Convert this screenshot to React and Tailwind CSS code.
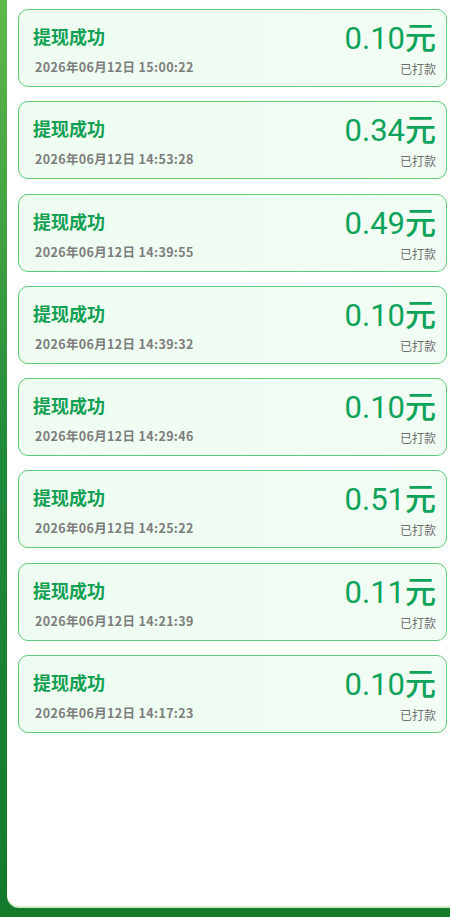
import React from "react";

const items = [
  { amount: "0.10", time: "2026年06月12日 15:00:22" },
  { amount: "0.34", time: "2026年06月12日 14:53:28" },
  { amount: "0.49", time: "2026年06月12日 14:39:55" },
  { amount: "0.10", time: "2026年06月12日 14:39:32" },
  { amount: "0.10", time: "2026年06月12日 14:29:46" },
  { amount: "0.51", time: "2026年06月12日 14:25:22" },
  { amount: "0.11", time: "2026年06月12日 14:21:39" },
  { amount: "0.10", time: "2026年06月12日 14:17:23" },
];

export default function App() {
  return (
    <div
      className="w-[450px] h-[917px] flex flex-col bg-gradient-to-b from-[#5fb84a] via-[#1d8a3a] to-[#137a2c] overflow-hidden"
      style={{ fontFamily: '"Noto Sans CJK SC", "Noto Sans", sans-serif' }}
    >
      <div className="flex-1 ml-[7px] mb-[11px] bg-white rounded-bl-[12px] shadow-[0_2px_0_#cfeec0] pt-[9px] pl-[11px] pr-[3px] flex flex-col gap-[14.3px]">
        {items.map((it, i) => (
          <div
            key={i}
            className="h-[78px] rounded-[10px] border-[1.5px] border-[#5ccc7b] bg-gradient-to-r from-[#eefcf1] to-[#f2fdf4] flex justify-between pl-[14px] pr-[10px]"
          >
            <div className="flex flex-col pt-[13px]">
              <div className="text-[18px] leading-[26px] font-bold text-[#12a053]">提现成功</div>
              <div className="mt-[10px] ml-[2px] text-[12.5px] leading-[16px] font-bold text-[#7d7d7d] tracking-[0.35px]">
                {it.time}
              </div>
            </div>
            <div className="flex flex-col items-end pt-[7px]">
              <div className="text-[31px] leading-[38px] text-[#0ea35a] flex items-baseline">
                <span style={{ fontFamily: "Roboto, sans-serif" }}>{it.amount}</span>
                <span className="font-medium">元</span>
              </div>
              <div className="mt-[3px] text-[12px] leading-[16px] text-[#6e6e6e]">已打款</div>
            </div>
          </div>
        ))}
      </div>
    </div>
  );
}
